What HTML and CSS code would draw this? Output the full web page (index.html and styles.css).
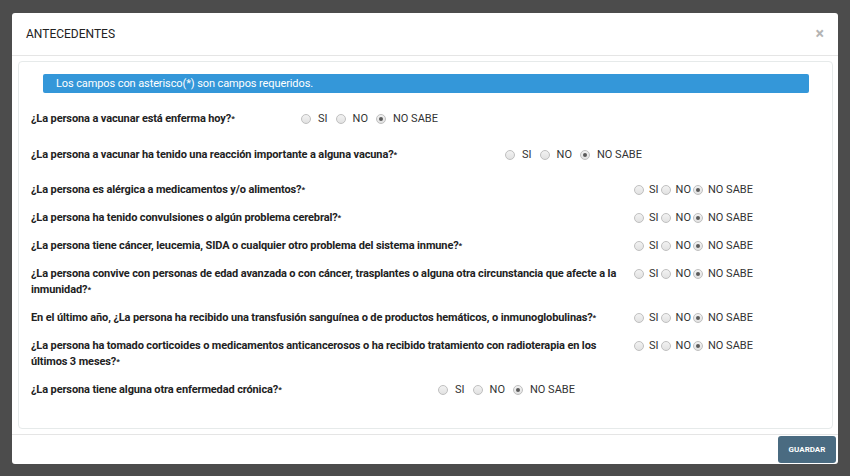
FILE: index.html
```html
<!DOCTYPE html>
<html lang="es">
<head>
<meta charset="utf-8">
<title>Antecedentes</title>
<link rel="stylesheet" href="styles.css">
</head>
<body>
<div class="modal">
  <div class="modal-header">
    <h4 class="title">ANTECEDENTES</h4>
    <span class="close">×</span>
  </div>
  <div class="modal-body">
    <div class="panel">
      <div class="alert">Los campos con asterisco(*) son campos requeridos.</div>
      <div class="questions">
        <div class="q q-gap-lg">
          <div class="q-label w-1">¿La persona a vacunar está enferma hoy?<span class="req">*</span></div>
          <div class="opts">
            <label class="opt"><span class="radio"></span>SI</label>
            <label class="opt"><span class="radio"></span>NO</label>
            <label class="opt"><span class="radio checked"></span>NO SABE</label>
          </div>
        </div>
        <div class="q q-gap-md">
          <div class="q-label w-2">¿La persona a vacunar ha tenido una reacción importante a alguna vacuna?<span class="req">*</span></div>
          <div class="opts">
            <label class="opt"><span class="radio"></span>SI</label>
            <label class="opt"><span class="radio"></span>NO</label>
            <label class="opt"><span class="radio checked"></span>NO SABE</label>
          </div>
        </div>
        <div class="q">
          <div class="q-label w-c">¿La persona es alérgica a medicamentos y/o alimentos?<span class="req">*</span></div>
          <div class="opts compact">
            <label class="opt"><span class="radio"></span>SI</label>
            <label class="opt"><span class="radio"></span>NO</label>
            <label class="opt"><span class="radio checked"></span>NO SABE</label>
          </div>
        </div>
        <div class="q">
          <div class="q-label w-c">¿La persona ha tenido convulsiones o algún problema cerebral?<span class="req">*</span></div>
          <div class="opts compact">
            <label class="opt"><span class="radio"></span>SI</label>
            <label class="opt"><span class="radio"></span>NO</label>
            <label class="opt"><span class="radio checked"></span>NO SABE</label>
          </div>
        </div>
        <div class="q">
          <div class="q-label w-c">¿La persona tiene cáncer, leucemia, SIDA o cualquier otro problema del sistema inmune?<span class="req">*</span></div>
          <div class="opts compact">
            <label class="opt"><span class="radio"></span>SI</label>
            <label class="opt"><span class="radio"></span>NO</label>
            <label class="opt"><span class="radio checked"></span>NO SABE</label>
          </div>
        </div>
        <div class="q">
          <div class="q-label w-c">¿La persona convive con personas de edad avanzada o con cáncer, trasplantes o alguna otra circunstancia que afecte a la inmunidad?<span class="req">*</span></div>
          <div class="opts compact">
            <label class="opt"><span class="radio"></span>SI</label>
            <label class="opt"><span class="radio"></span>NO</label>
            <label class="opt"><span class="radio checked"></span>NO SABE</label>
          </div>
        </div>
        <div class="q">
          <div class="q-label w-c">En el último año, ¿La persona ha recibido una transfusión sanguínea o de productos hemáticos, o inmunoglobulinas?<span class="req">*</span></div>
          <div class="opts compact">
            <label class="opt"><span class="radio"></span>SI</label>
            <label class="opt"><span class="radio"></span>NO</label>
            <label class="opt"><span class="radio checked"></span>NO SABE</label>
          </div>
        </div>
        <div class="q">
          <div class="q-label w-c">¿La persona ha tomado corticoides o medicamentos anticancerosos o ha recibido tratamiento con radioterapia en los últimos 3 meses?<span class="req">*</span></div>
          <div class="opts compact">
            <label class="opt"><span class="radio"></span>SI</label>
            <label class="opt"><span class="radio"></span>NO</label>
            <label class="opt"><span class="radio checked"></span>NO SABE</label>
          </div>
        </div>
        <div class="q">
          <div class="q-label w-9">¿La persona tiene alguna otra enfermedad crónica?<span class="req">*</span></div>
          <div class="opts">
            <label class="opt"><span class="radio"></span>SI</label>
            <label class="opt"><span class="radio"></span>NO</label>
            <label class="opt"><span class="radio checked"></span>NO SABE</label>
          </div>
        </div>
      </div>
    </div>
  </div>
  <div class="modal-footer">
    <button class="btn">GUARDAR</button>
  </div>
</div>
</body>
</html>
```

FILE: styles.css
```css
* { box-sizing: border-box; }

body {
  margin: 0;
  background: #4c4c4c;
  font-family: Roboto, "Liberation Sans", Arial, sans-serif;
  color: #333;
}

.modal {
  margin: 13px 0 0 12px;
  width: 826px;
  height: 451px;
  background: #fff;
  border-radius: 3px;
  display: flex;
  flex-direction: column;
}

.modal-header {
  height: 43px;
  border-bottom: 1px solid #e5e5e5;
  display: flex;
  align-items: center;
  justify-content: space-between;
  padding: 0 14px 0 14px;
}

.title {
  margin: 0;
  font-size: 12px;
  font-weight: 400;
  color: #222;
}

.close {
  font-size: 16px;
  font-weight: 700;
  color: #b4b4b4;
  line-height: 1;
}

.modal-body {
  flex: 1;
  padding: 5px 5px 5px 6px;
  display: flex;
}

.panel {
  flex: 1;
  border: 1px solid #e6eaea;
  border-radius: 4px;
  padding: 12px 12px 0 12px;
}

.alert {
  margin: 0 11px 0 12px;
  height: 19px;
  line-height: 19px;
  background: #3497d9;
  color: #fff;
  font-size: 11px;
  letter-spacing: -0.1px;
  padding-left: 13px;
  border-radius: 2px;
}

.questions {
  margin-top: 18px;
}

.q {
  display: flex;
  align-items: flex-start;
  font-size: 11px;
  line-height: 16px;
  margin-bottom: 12px;
}

.q-gap-lg { margin-bottom: 20px; }
.q-gap-md { margin-bottom: 19px; }

.q-label {
  font-weight: 700;
  color: #222;
  letter-spacing: -0.12px;
  flex: none;
}

.w-1 { width: 270px; }
.w-2 { width: 474px; }
.w-9 { width: 407px; }
.w-c { width: 603px; padding-right: 4px; }

.req {
  font-size: 8px;
  line-height: 0;
  vertical-align: 1px;
}

.opts {
  display: flex;
  gap: 8px;
  color: #333;
}

.opt {
  display: flex;
  align-items: flex-start;
  gap: 7px;
  white-space: nowrap;
}

.opts.compact { gap: 2px; }
.opts.compact .opt { gap: 5px; }

.radio {
  width: 10px;
  height: 10px;
  margin-top: 3px;
  border: 1px solid #bfbfbf;
  border-radius: 50%;
  background: linear-gradient(#f2f2f2, #e2e2e2);
  display: flex;
  align-items: center;
  justify-content: center;
}

.radio.checked::after {
  content: "";
  width: 4px;
  height: 4px;
  border-radius: 50%;
  background: #5a5a5a;
}

.modal-footer {
  height: 30px;
  border-top: 1px solid #e5e5e5;
  display: flex;
  justify-content: flex-end;
  align-items: flex-start;
  padding: 1px 2px 0 0;
}

.btn {
  width: 58px;
  height: 27px;
  border: none;
  border-radius: 3px;
  background: #4a6b81;
  color: #fff;
  font-family: Roboto, "Liberation Sans", Arial, sans-serif;
  font-size: 8px;
  font-weight: 700;
  padding: 0;
}
```
